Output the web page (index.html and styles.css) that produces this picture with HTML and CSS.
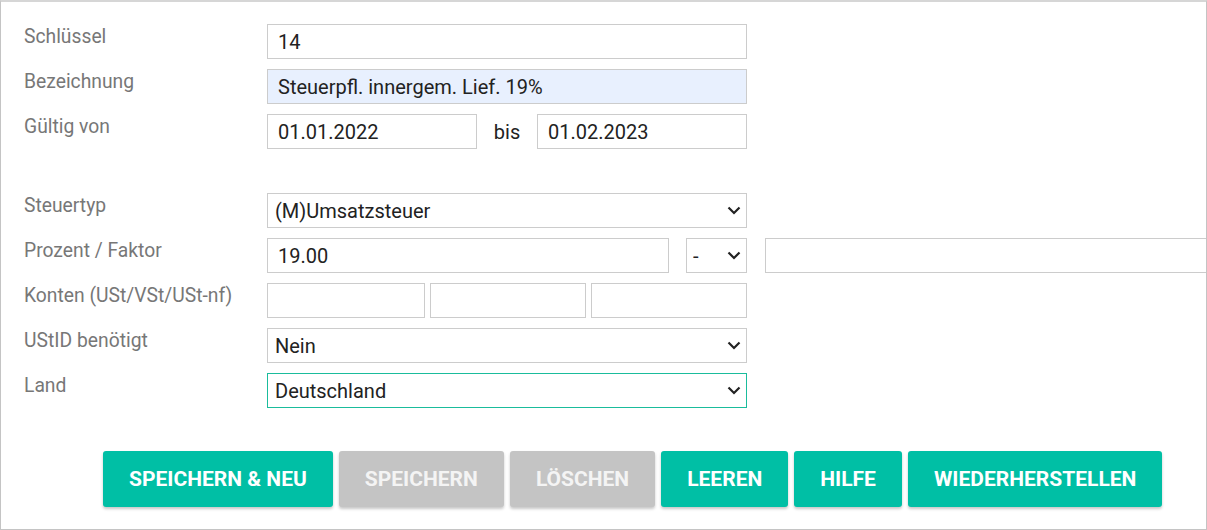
FILE: index.html
```html
<!DOCTYPE html>
<html lang="de">
<head>
<meta charset="utf-8">
<title>Steuerschlüssel</title>
<link rel="stylesheet" href="styles.css">
</head>
<body>
<div class="frame">
  <form class="form">
    <div class="row">
      <label class="label">Schlüssel</label>
      <div class="field"><input class="input full" type="text" value="14"></div>
    </div>
    <div class="row">
      <label class="label">Bezeichnung</label>
      <div class="field"><input class="input full autofill" type="text" value="Steuerpfl. innergem. Lief. 19%"></div>
    </div>
    <div class="row">
      <label class="label">Gültig von</label>
      <div class="field dates">
        <input class="input date" type="text" value="01.01.2022">
        <span class="bis">bis</span>
        <input class="input date" type="text" value="01.02.2023">
      </div>
    </div>
    <div class="spacer"></div>
    <div class="row">
      <label class="label">Steuertyp</label>
      <div class="field">
        <div class="select-wrap full">
          <select class="select"><option>(M)Umsatzsteuer</option></select>
          <svg class="chevron" width="14" height="9" viewBox="0 0 14 9"><path d="M1.5 1.5l5.5 5.5 5.5-5.5" fill="none" stroke="#222" stroke-width="2.2"/></svg>
        </div>
      </div>
    </div>
    <div class="row">
      <label class="label">Prozent / Faktor</label>
      <div class="field percent">
        <input class="input pct" type="text" value="19.00">
        <div class="select-wrap small">
          <select class="select narrow"><option>-</option></select>
          <svg class="chevron" width="14" height="9" viewBox="0 0 14 9"><path d="M1.5 1.5l5.5 5.5 5.5-5.5" fill="none" stroke="#222" stroke-width="2.2"/></svg>
        </div>
        <input class="input factor" type="text" value="">
      </div>
    </div>
    <div class="row">
      <label class="label">Konten (USt/VSt/USt-nf)</label>
      <div class="field accounts">
        <input class="input" type="text" value="">
        <input class="input" type="text" value="">
        <input class="input" type="text" value="">
      </div>
    </div>
    <div class="row">
      <label class="label">UStID benötigt</label>
      <div class="field">
        <div class="select-wrap full">
          <select class="select"><option>Nein</option></select>
          <svg class="chevron" width="14" height="9" viewBox="0 0 14 9"><path d="M1.5 1.5l5.5 5.5 5.5-5.5" fill="none" stroke="#222" stroke-width="2.2"/></svg>
        </div>
      </div>
    </div>
    <div class="row">
      <label class="label">Land</label>
      <div class="field">
        <div class="select-wrap full">
          <select class="select focused"><option>Deutschland</option></select>
          <svg class="chevron" width="14" height="9" viewBox="0 0 14 9"><path d="M1.5 1.5l5.5 5.5 5.5-5.5" fill="none" stroke="#222" stroke-width="2.2"/></svg>
        </div>
      </div>
    </div>
    <div class="buttons">
      <button type="button" class="btn primary">Speichern &amp; Neu</button>
      <button type="button" class="btn disabled">Speichern</button>
      <button type="button" class="btn disabled">Löschen</button>
      <button type="button" class="btn primary">Leeren</button>
      <button type="button" class="btn primary">Hilfe</button>
      <button type="button" class="btn primary">Wiederherstellen</button>
    </div>
  </form>
</div>
</body>
</html>
```
FILE: styles.css
```css
* { box-sizing: border-box; }

html, body {
  margin: 0;
  padding: 0;
  background: #ffffff;
}

body {
  font-family: Roboto, "Liberation Sans", Arial, sans-serif;
}

.frame {
  width: 1207px;
  height: 530px;
  border: 1px solid #c4c4c4;
  border-top: 2px solid #d6d6d6;
  overflow: hidden;
  padding: 22px 0 0 23px;
  background: #fff;
}

.form {
  margin: 0;
}

.row {
  display: flex;
  align-items: flex-start;
  margin-bottom: 10px;
  height: 35px;
}

.label {
  flex: none;
  width: 243px;
  padding-top: 2px;
  font-size: 19.3px;
  line-height: 22px;
  color: #777777;
}

.field {
  flex: none;
  width: 480px;
  display: flex;
}

.input,
.select {
  height: 35px;
  border: 1px solid #cccccc;
  border-radius: 0;
  background: #fff;
  font-family: Roboto, "Liberation Sans", Arial, sans-serif;
  font-size: 20px;
  color: #222222;
  outline: none;
  margin: 0;
}

.input {
  padding: 0 10px;
}

.full {
  width: 480px;
}

.autofill {
  background: #e8f0fe;
}

.dates {
  align-items: center;
}

.date {
  width: 210px;
  flex: none;
}

.bis {
  flex: 1;
  text-align: center;
  font-size: 20px;
  color: #222;
}

.spacer {
  height: 34px;
}

.select-wrap {
  position: relative;
  flex: none;
}

.select {
  width: 100%;
  appearance: none;
  -webkit-appearance: none;
  padding: 0 30px 0 7px;
}

.select.narrow {
  padding: 0 20px 0 6px;
}

.focused {
  border-color: #1abc9c;
}

.chevron {
  position: absolute;
  right: 6px;
  top: 13px;
  pointer-events: none;
}

.percent {
  width: auto;
}

.pct {
  width: 402px;
  flex: none;
}

.small {
  width: 61px;
  margin-left: 17px;
}

.factor {
  width: 520px;
  flex: none;
  margin-left: 18px;
}

.accounts {
  display: grid;
  grid-template-columns: 158px 156px 156px;
  column-gap: 5px;
}

.accounts .input {
  width: 100%;
}

.buttons {
  display: flex;
  gap: 6px;
  margin: 43px 0 0 79px;
}

.btn {
  height: 56px;
  padding: 0 26px;
  border: none;
  border-radius: 3px;
  font-family: Roboto, "Liberation Sans", Arial, sans-serif;
  font-size: 21px;
  font-weight: 700;
  text-transform: uppercase;
  color: #ffffff;
  box-shadow: 0 2px 3px rgba(0, 0, 0, 0.22);
  cursor: pointer;
}

.primary {
  background: #00bfa5;
}

.disabled {
  background: #c4c4c4;
  color: #f4f4f4;
}
```
